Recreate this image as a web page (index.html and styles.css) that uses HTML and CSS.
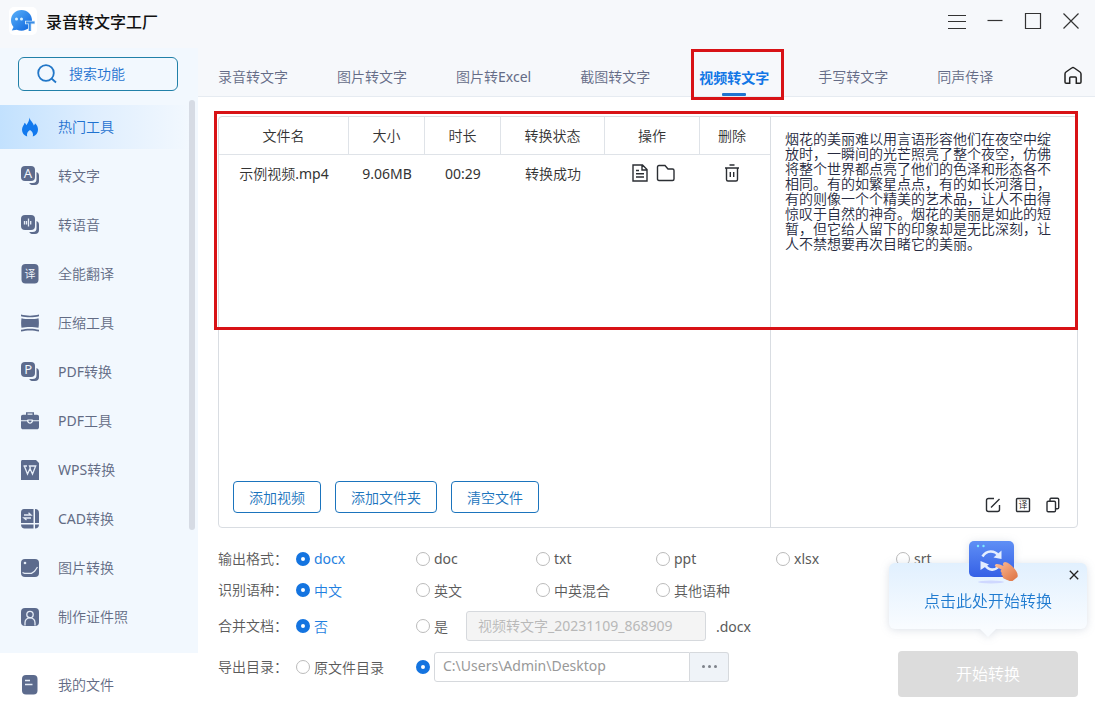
FILE: index.html
```html
<!DOCTYPE html>
<html lang="zh-CN">
<head>
  <meta charset="UTF-8" />
  <meta name="viewport" content="width=device-width, initial-scale=1.0" />
  <title>录音转文字工厂</title>
  <link rel="stylesheet" href="styles.css">
</head>
<body>
  <header class="titlebar">
    <div class="brand">
      <svg class="logo" width="28" height="28" viewBox="0 0 28 28">
        <defs>
          <linearGradient id="logoFill" x1="0" y1="0" x2="1" y2="1">
            <stop offset="0" stop-color="#5ab2fa" />
            <stop offset="1" stop-color="#0b62dc" />
          </linearGradient>
        </defs>
        <rect width="28" height="28" rx="5" fill="#fff" />
        <path d="M12.500 3C6.500 3 2 7.300 2 13.300c0 2.800 1 5 2.500 6.600l-1.700 3.600 5-.7c1.500.6 3 .9 4.700.9 6 0 10.500-4.500 10.500-10.400S18.500 3 12.500 3z" fill="url(#logoFill)" />
        <circle cx="7.500" cy="12" r="1.500" fill="#d8f1ff" />
        <circle cx="12.500" cy="12" r="1.500" fill="#d8f1ff" />
        <path d="M16 15.500h10M20.800 15.500V24" stroke="#cfe6fb" stroke-width="3.400" />
        <path d="M17 15.500h8.500M20.800 15.500V24" stroke="#3a8ce6" stroke-width="1.900" />
      </svg>
      <h1>录音转文字工厂</h1>
    </div>
    <div class="window-buttons">
      <svg width="18" height="18" viewBox="0 0 18 18"><path d="M0 3.500h18M0 9.500h18M0 16.500h18" /></svg>
      <svg width="18" height="18" viewBox="0 0 18 18"><path d="M1.500 8.500h15" /></svg>
      <svg width="18" height="18" viewBox="0 0 18 18"><path d="M1.500 1.500h15v15h-15z" /></svg>
      <svg width="18" height="18" viewBox="0 0 18 18"><path d="M1.500 1.500l15 15M16.500 1.500l-15 15" /></svg>
    </div>
  </header>

  <div class="layout">
    <aside class="sidebar">
      <div class="menu">
        <div class="search">
          <svg width="20" height="20" viewBox="0 0 20 20"><circle cx="9" cy="9" r="7.800" /><path d="M14.500 14.500l4.500 4" /></svg>
          <span>搜索功能</span>
        </div>
        <nav>
          <a class="menu-item active">
            <svg class="icon" width="20" height="20" viewBox="0 0 20 20"><path d="M9.500.5c.3 3 3.500 4.500 4.300 8 .7-.5 1.100-1.200 1.200-2.200C17.200 8.200 18 10.500 18 12.700c0 3.300-2 5.800-5.200 6.800.8-2.700-.4-4.800-2.800-6.500-2.400 1.700-3.600 3.800-2.800 6.500C4 18.500 2 16 2 12.700 2 9.700 4 8.200 4.600 5.800c.9.600 1.400 1.400 1.700 2.400C8 6 9.200 4 9.500.5z" /></svg>
            <span>热门工具</span>
          </a>
          <a class="menu-item">
            <svg class="icon" width="20" height="20" viewBox="0 0 20 20"><rect x="1" y="0" width="14" height="15" rx="4" /><path d="M16.500 6c2 .8 2.500 2 2.500 4v5c0 2.500-1.500 4-4 4h-2c-2 0-3-.5-3.700-2h3.200c3 0 4-1.500 4-4z" /><text x="8" y="12.300" class="glyph">A</text></svg>
            <span>转文字</span>
          </a>
          <a class="menu-item">
            <svg class="icon" width="20" height="20" viewBox="0 0 20 20"><rect x="1" y="0" width="14" height="15" rx="4" /><path d="M16.500 6c2 .8 2.500 2 2.500 4v5c0 2.500-1.500 4-4 4h-2c-2 0-3-.5-3.700-2h3.200c3 0 4-1.500 4-4z" /><path class="line" d="M4.500 6v3.500M6.500 6v3.500M8.500 3.500v8M10.700 6v3.500" /></svg>
            <span>转语音</span>
          </a>
          <a class="menu-item">
            <svg class="icon" width="20" height="20" viewBox="0 0 20 20"><rect x="1.500" y="0" width="17" height="19.500" rx="4" /><text x="10" y="14" class="glyph glyph-cn">译</text></svg>
            <span>全能翻译</span>
          </a>
          <a class="menu-item">
            <svg class="icon" width="20" height="20" viewBox="0 0 20 20"><path d="M1 1.500c5 1.500 13 1.500 18 0v1.700c-5 1.500-13 1.500-18 0zM1 18.500c5-1.500 13-1.500 18 0v-1.700c-5-1.500-13-1.500-18 0zM1.500 5.200c5 1.200 12 1.200 17 0 .5 3 .5 6.600 0 9.600-5-1.200-12-1.200-17 0-.5-3-.5-6.600 0-9.600z" /></svg>
            <span>压缩工具</span>
          </a>
          <a class="menu-item">
            <svg class="icon" width="20" height="20" viewBox="0 0 20 20"><rect x="1" y="0" width="14" height="15" rx="4" /><path d="M16.500 6c2 .8 2.500 2 2.500 4v5c0 2.500-1.500 4-4 4h-2c-2 0-3-.5-3.700-2h3.200c3 0 4-1.500 4-4z" /><text x="8.200" y="12.300" class="glyph">P</text></svg>
            <span>PDF转换</span>
          </a>
          <a class="menu-item">
            <svg class="icon" width="20" height="20" viewBox="0 0 20 20"><path d="M6 4V1.200h8V4h-1.500V2.500h-5V4zM3 3.700h14c1.300 0 2 .8 2 2v3.500h-6c-.3-.6-.8-.7-1.500-.7h-3c-.7 0-1.200.1-1.500.7H1V5.700c0-1.200.7-2 2-2z" /><path d="M1 10.300h6c.5 1.700 1.500 2.400 3 2.400s2.500-.7 3-2.400h6V16c0 1.500-.8 2.300-2.300 2.300H3.300C1.800 18.300 1 17.500 1 16z" /><path d="M8.500 9.500h3v1c-.5 1.300-2.500 1.300-3 0z" /></svg>
            <span>PDF工具</span>
          </a>
          <a class="menu-item">
            <svg class="icon" width="20" height="20" viewBox="0 0 20 20"><path d="M2.500 0H16l3 3v17H1V1.500C1 .6 1.600 0 2.500 0z" /><path class="line" d="M3.500 6h3.500M4.300 6l3.200 8L10 8.500l2.500 5.500 3.200-8H9.500l1 2.500" /></svg>
            <span>WPS转换</span>
          </a>
          <a class="menu-item">
            <svg class="icon" width="20" height="20" viewBox="0 0 20 20"><path d="M4 0h9.500v14H1V3.500C1 1.300 2 0 4 0zM1 15.500h12.500v4H4.500c-2 0-3.500-1.500-3.500-4zM15 0c2.800 0 4 1.300 4 4v10h-4zM15 15.500h4c0 2.500-1.500 4-4 4z" /><path class="line" d="M4 6h7L8.500 3.800M11 9H4l2.500 2" /></svg>
            <span>CAD转换</span>
          </a>
          <a class="menu-item">
            <svg class="icon" width="20" height="20" viewBox="0 0 20 20"><rect x="1" y="1" width="18" height="18" rx="4" /><path class="line" d="M2.500 14.500l2 .8h7l3-2L17.500 9" /><circle cx="5" cy="5" r="1.300" fill="#e6edf7" /></svg>
            <span>图片转换</span>
          </a>
          <a class="menu-item">
            <svg class="icon" width="20" height="20" viewBox="0 0 20 20"><rect x="1" y="1" width="18" height="18" rx="4" /><circle class="line" cx="10" cy="7.500" r="3.200" /><path class="line" d="M5 18.500v-2.500c0-3 2-5.200 5-5.200s5 2.200 5 5.200v2.500" /></svg>
            <span>制作证件照</span>
          </a>
        </nav>
        <div class="scrollbar"></div>
      </div>
      <a class="menu-item my-files">
        <svg class="icon" width="20" height="20" viewBox="0 0 20 20"><rect x="2" y="0" width="15.500" height="19.500" rx="4" /><path class="line" d="M5 5.500h5M5 9.500h7.500" /></svg>
        <span>我的文件</span>
      </a>
    </aside>

    <main class="content">
      <nav class="tabs">
        <a>录音转文字</a>
        <a>图片转文字</a>
        <a>图片转Excel</a>
        <a>截图转文字</a>
        <a class="current">视频转文字</a>
        <a>手写转文字</a>
        <a>同声传译</a>
        <svg class="home" width="20" height="20" viewBox="0 0 20 20"><path d="M2 8c0-1 .3-1.500 1-2l5.700-4c.8-.6 1.800-.6 2.600 0L17 6c.7.500 1 1 1 2v8c0 .800-.5 1.300-1.300 1.300h-3.400V12c0-.7-.3-1-1-1H7.700c-.7 0-1 .3-1 1v5.300H3.300C2.500 17.300 2 16.800 2 16z" /></svg>
      </nav>

      <section class="workspace">
        <div class="files">
          <div class="file-row file-head">
            <span>文件名</span><span>大小</span><span>时长</span><span>转换状态</span><span>操作</span><span>删除</span>
          </div>
          <div class="file-row">
            <span>示例视频.mp4</span>
            <span>9.06MB</span>
            <span>00:29</span>
            <span>转换成功</span>
            <span class="actions">
              <svg class="tool" width="18" height="18" viewBox="0 0 18 18"><path d="M2 1h9.500L16 5.500V17H2zM11 1v5h5M5 6.500h3M5 9.700h8M5 13h8" /></svg>
              <svg class="tool" width="20" height="18" viewBox="0 0 20 18"><path d="M1.500 3c0-1 .5-1.500 1.500-1.500h6L12 5h4.500c1 0 1.500.5 1.500 1.500V15c0 1-.5 1.500-1.500 1.500H3c-1 0-1.500-.5-1.500-1.500z" /></svg>
            </span>
            <span><svg class="tool" width="18" height="18" viewBox="0 0 18 18"><path d="M2 4h14M6.500 1h5M3.500 4v11.500c0 1 .5 1.500 1.500 1.500h8c1 0 1.500-.5 1.500-1.500V4M7.300 8v5M10.700 8v5" /></svg></span>
          </div>
          <div class="file-buttons">
            <button>添加视频</button>
            <button>添加文件夹</button>
            <button>清空文件</button>
          </div>
        </div>
        <div class="result">
          <p>烟花的美丽难以用言语形容他们在夜空中绽放时，一瞬间的光芒照亮了整个夜空，仿佛将整个世界都点亮了他们的色泽和形态各不相同。有的如繁星点点，有的如长河落日，有的则像一个个精美的艺术品，让人不由得惊叹于自然的神奇。烟花的美丽是如此的短暂，但它给人留下的印象却是无比深刻，让人不禁想要再次目睹它的美丽。</p>
          <div class="result-tools">
            <svg class="tool" width="16" height="16" viewBox="0 0 16 16"><path d="M9 1.500H3.500c-1.300 0-2 .7-2 2v9c0 1.300.7 2 2 2h9c1.300 0 2-.7 2-2V8M14.500 2L6 10.500" /></svg>
            <svg class="tool" width="16" height="16" viewBox="0 0 16 16"><rect x="1.500" y="1.500" width="13" height="13" rx="1" /><text x="8" y="11.300">译</text></svg>
            <svg class="tool" width="16" height="16" viewBox="0 0 16 16"><path d="M5 4V2.500C5 1.700 5.300 1.300 6 1.300h6.500c.8 0 1.200.4 1.200 1.200v8c0 .8-.4 1.200-1.200 1.200H11" /><rect x="2" y="4.200" width="8.500" height="10.500" rx="1.200" /></svg>
          </div>
        </div>
      </section>

      <form class="options">
        <div class="option-row">
          <span class="label">输出格式：</span>
          <label class="radio checked">docx</label>
          <label class="radio">doc</label>
          <label class="radio">txt</label>
          <label class="radio">ppt</label>
          <label class="radio">xlsx</label>
          <label class="radio">srt</label>
        </div>
        <div class="option-row">
          <span class="label">识别语种：</span>
          <label class="radio checked">中文</label>
          <label class="radio">英文</label>
          <label class="radio">中英混合</label>
          <label class="radio">其他语种</label>
        </div>
        <div class="option-row row-merge">
          <span class="label">合并文档：</span>
          <label class="radio checked">否</label>
          <label class="radio radio-yes">是</label>
          <span class="field field-name">视频转文字_20231109_868909</span>
          <span>.docx</span>
        </div>
        <div class="option-row row-path">
          <span class="label">导出目录：</span>
          <label class="radio">原文件目录</label>
          <label class="radio radio-path checked"></label>
          <span class="field field-path">C:\Users\Admin\Desktop</span>
          <span class="browse"><i></i><i></i><i></i></span>
        </div>
      </form>

      <button class="start">开始转换</button>

      <div class="tip">
        <svg class="tip-art" width="54" height="46" viewBox="0 0 54 46">
          <defs>
            <linearGradient id="artFill" x1="0" y1="0" x2="0" y2="1">
              <stop offset="0" stop-color="#5f8ff5" />
              <stop offset="1" stop-color="#3560e6" />
            </linearGradient>
            <linearGradient id="handFill" x1="0" y1="0" x2="1" y2="1">
              <stop offset="0" stop-color="#ffc09a" />
              <stop offset="1" stop-color="#dc7040" />
            </linearGradient>
          </defs>
          <ellipse cx="23" cy="42" rx="13" ry="1.500" fill="#cfd8ff" />
          <rect x="1" y="1" width="45" height="36" rx="5" fill="url(#artFill)" />
          <circle cx="10" cy="6" r="1.200" fill="#7fe8ff" />
          <circle cx="15.500" cy="6" r="1.200" fill="#7fe8ff" />
          <path d="M14.500 16.500c4-6.500 12-6.500 16-1" fill="none" stroke="#e4eeff" stroke-width="2.600" />
          <path d="M33.500 10.500v8.500l-8-1.500z" fill="#e4eeff" />
          <path d="M31 26c-4 5-10 5-14-1" fill="none" stroke="#e4eeff" stroke-width="2.600" />
          <path d="M12.500 30v-9l8.500 3.500z" fill="#e4eeff" />
          <path d="M27.500 24.500c1.500-1 4.500 0 8 1.500-1-2-.5-3.700 1.500-4 3 .3 5.500 2.500 8 5 3 3.500 5.500 6.500 4.500 10l-5 4c-3 .5-5.500-1-7.500-2-2-.7-2.800-1.800-2-3-1.800-.8-2.200-2-1-3-1.600-1-1.800-2.500-.5-3.500l-5.500-2.500c-1.200-.8-1.500-1.800-.5-2.500z" fill="url(#handFill)" />
        </svg>
        <svg class="tip-close" width="10" height="10" viewBox="0 0 10 10"><path d="M.8.8l8.400 8.400M9.200.8L.8 9.200" /></svg>
        <span>点击此处开始转换</span>
      </div>
    </main>
  </div>

  <div class="mark mark-tab"></div>
  <div class="mark mark-files"></div>
</body>
</html>
```
FILE: styles.css
```css
*,
*::before,
*::after {
  margin: 0;
  padding: 0;
  box-sizing: border-box;
}

body {
  width: 1095px;
  height: 711px;
  overflow: hidden;
  position: relative;
  display: flex;
  flex-direction: column;
  background-color: #f6f8fb;
  font-family: "Noto Sans", "Noto Sans CJK SC DemiLight", "Noto Sans CJK SC", sans-serif;
  font-size: 14px;
  font-weight: 400;
  color: #333;
}

button {
  font: inherit;
}

svg {
  display: block;
  flex: none;
  overflow: visible;
}

.titlebar {
  height: 48px;
  flex: none;
  display: flex;
  justify-content: space-between;
  align-items: flex-start;
  padding: 7px 15px 0 9px;
}

.brand {
  display: flex;
  align-items: center;
  gap: 9px;
}

.brand h1 {
  font-family: "Noto Sans CJK SC", sans-serif;
  font-size: 16px;
  font-weight: 500;
  line-height: 28px;
  color: #111;
}

.window-buttons {
  display: flex;
  gap: 20px;
  padding-top: 5px;
}

.window-buttons svg {
  fill: none;
  stroke: #333;
  stroke-width: 1.2;
}

.layout {
  flex: 1;
  display: flex;
  min-height: 0;
}

.sidebar {
  width: 198px;
  flex: none;
  display: flex;
  flex-direction: column;
  background-color: #fff;
}

.menu {
  position: relative;
  height: 605px;
  background-color: #f2f8fe;
}

.search {
  width: 160px;
  height: 34px;
  margin: 9px 0 14px 18px;
  padding-left: 18px;
  display: flex;
  align-items: center;
  gap: 12px;
  border: 1px solid #2180a8;
  border-radius: 6px;
  color: #1f72d0;
}

.search svg {
  fill: none;
  stroke: #2277c8;
  stroke-width: 1.8;
}

.search span,
.menu-item span {
  margin-top: -2px;
}

.menu nav {
  display: flex;
  flex-direction: column;
  gap: 5px;
}

.menu-item {
  height: 44px;
  padding-left: 20px;
  display: flex;
  align-items: center;
  gap: 18px;
  color: #626b84;
}

.menu-item.active {
  width: 189px;
  color: #1f72d0;
  background: linear-gradient(to right, #c2e1fe, #dfeefe 50%, #f2f8fe);
}

.icon {
  fill: #5c6b8d;
}

.active .icon {
  fill: #1279ee;
}

.icon .line {
  fill: none;
  stroke: #e6edf7;
  stroke-width: 1.3;
}

.glyph {
  fill: #f2f6fc;
  font-size: 13px;
  text-anchor: middle;
}

.glyph-cn {
  font-size: 11px;
}

.my-files {
  margin-top: 10px;
}

.scrollbar {
  position: absolute;
  top: 52px;
  right: 3px;
  width: 6px;
  height: 430px;
  border-radius: 3px;
  background-color: #d6dbe4;
}

.content {
  flex: 1;
  position: relative;
  background-color: #fff;
}

.tabs {
  height: 49px;
  display: flex;
  gap: 49px;
  padding: 0 12px 0 20px;
  background-color: #f6f8fb;
  border-bottom: 1px solid #e6ebf1;
  color: #646b86;
}

.tabs a {
  height: 48px;
  padding-top: 18px;
  line-height: 22px;
  white-space: nowrap;
}

.tabs .current {
  display: flex;
  flex-direction: column;
  align-items: center;
  justify-content: space-between;
  font-family: "Noto Sans CJK SC", sans-serif;
  font-weight: 600;
  color: #1277e6;
}

.tabs .current::after {
  content: "";
  width: 24px;
  height: 3px;
  border-radius: 1px;
  background-color: #1f74d0;
}

.home {
  margin: 18px 0 0 auto;
  fill: none;
  stroke: #222;
  stroke-width: 1.5;
}

.workspace {
  width: 860px;
  height: 412px;
  margin: 19px 0 0 20px;
  display: flex;
  border: 1px solid #d9dde2;
  border-radius: 4px;
}

.files {
  width: 552px;
  display: flex;
  flex-direction: column;
  border-right: 1px solid #d9dde2;
}

.file-row {
  height: 38px;
  display: grid;
  grid-template-columns: 130px 76px 76px 104px 95px 70px;
  color: #333;
}

.file-row span {
  display: flex;
  align-items: center;
  justify-content: center;
  padding-bottom: 2px;
}

.file-row span:last-child {
  padding-right: 6px;
}

.file-head {
  border-bottom: 1px solid #dfe3e8;
}

.file-head span:not(:last-child) {
  border-right: 1px solid #dfe3e8;
}

.file-row .actions {
  gap: 7px;
  padding-left: 1px;
}

.tool {
  fill: none;
  stroke: #2b2e33;
  stroke-width: 1.4;
}

.tool text {
  fill: #222;
  stroke: none;
  font-size: 9px;
  font-weight: 500;
  text-anchor: middle;
}

.file-buttons {
  display: flex;
  gap: 14px;
  margin-top: auto;
  padding: 0 0 14px 14px;
}

.file-buttons button {
  height: 32px;
  padding: 0 15px;
  color: #1b74bd;
  background-color: #fff;
  border: 1px solid #1b74bd;
  border-radius: 4px;
}

.result {
  flex: 1;
  display: flex;
  flex-direction: column;
  justify-content: space-between;
  padding: 14px 16px 14px 14px;
}

.result p {
  width: 268px;
  line-height: 15px;
  color: #262a40;
}

.result-tools {
  display: flex;
  justify-content: flex-end;
  gap: 14px;
}

.options {
  padding: 15px 0 0 20px;
  color: #5a5a5a;
}

.option-row {
  height: 31px;
  display: flex;
  align-items: center;
}

.label {
  width: 78px;
  margin-top: -2px;
  white-space: nowrap;
}

.radio {
  width: 120px;
  display: flex;
  align-items: center;
  gap: 4px;
}

.radio::before {
  content: "";
  width: 14px;
  height: 14px;
  flex: none;
  border: 1px solid #bbb;
  border-radius: 50%;
}

.radio.checked {
  color: #1f7fe0;
}

.radio.checked::before {
  border: 5px solid #1474e0;
}

.row-merge {
  height: 42px;
}

.row-path {
  height: 39px;
}

.radio-yes {
  width: 50px;
}

.radio-path {
  width: 18px;
}

.field {
  height: 30px;
  display: flex;
  align-items: center;
  padding-bottom: 2px;
  border: 1px solid #d6d9dd;
  border-radius: 3px;
}

.field-name {
  width: 240px;
  margin-right: 10px;
  padding-left: 11px;
  color: #b8b8b8;
  background-color: #f4f4f4;
}

.field-path {
  width: 256px;
  padding-left: 8px;
  border-radius: 3px 0 0 3px;
  color: #999;
}

.browse {
  width: 39px;
  height: 30px;
  display: flex;
  align-items: center;
  justify-content: center;
  gap: 3px;
  background-color: #eff3f8;
  border: 1px solid #d6d9dd;
  border-left: none;
  border-radius: 0 3px 3px 0;
}

.browse i {
  width: 3px;
  height: 3px;
  border-radius: 50%;
  background-color: #7d828a;
}

.start {
  position: absolute;
  right: 17px;
  bottom: 14px;
  width: 180px;
  height: 46px;
  padding-bottom: 2px;
  border: none;
  border-radius: 4px;
  font-size: 16px;
  color: #fff;
  background-color: #dcdcdc;
}

/* hint bubble above the start button */
.tip {
  position: absolute;
  right: 8px;
  bottom: 82px;
  width: 198px;
  height: 66px;
  padding-top: 8px;
  display: flex;
  align-items: center;
  justify-content: center;
  border-radius: 6px;
  font-size: 16px;
  color: #1f7bd0;
  background: linear-gradient(#e1f0fe, #f9fcff);
  filter: drop-shadow(0 1px 4px rgba(60, 90, 130, 0.18));
}

.tip::after {
  content: "";
  position: absolute;
  top: 100%;
  left: 91px;
  border: 8px solid transparent;
  border-top-color: #f9fcff;
  border-bottom: none;
}

.tip-art {
  position: absolute;
  top: -23px;
  left: 79px;
}

.tip-close {
  position: absolute;
  top: 7px;
  right: 8px;
  stroke: #222;
  stroke-width: 1.3;
}

/* red highlight frames */
.mark {
  position: absolute;
  border: 3px solid #d81216;
}

.mark-tab {
  left: 691px;
  top: 49px;
  width: 93px;
  height: 51px;
}

.mark-files {
  left: 214px;
  top: 111px;
  width: 864px;
  height: 219px;
}
```
